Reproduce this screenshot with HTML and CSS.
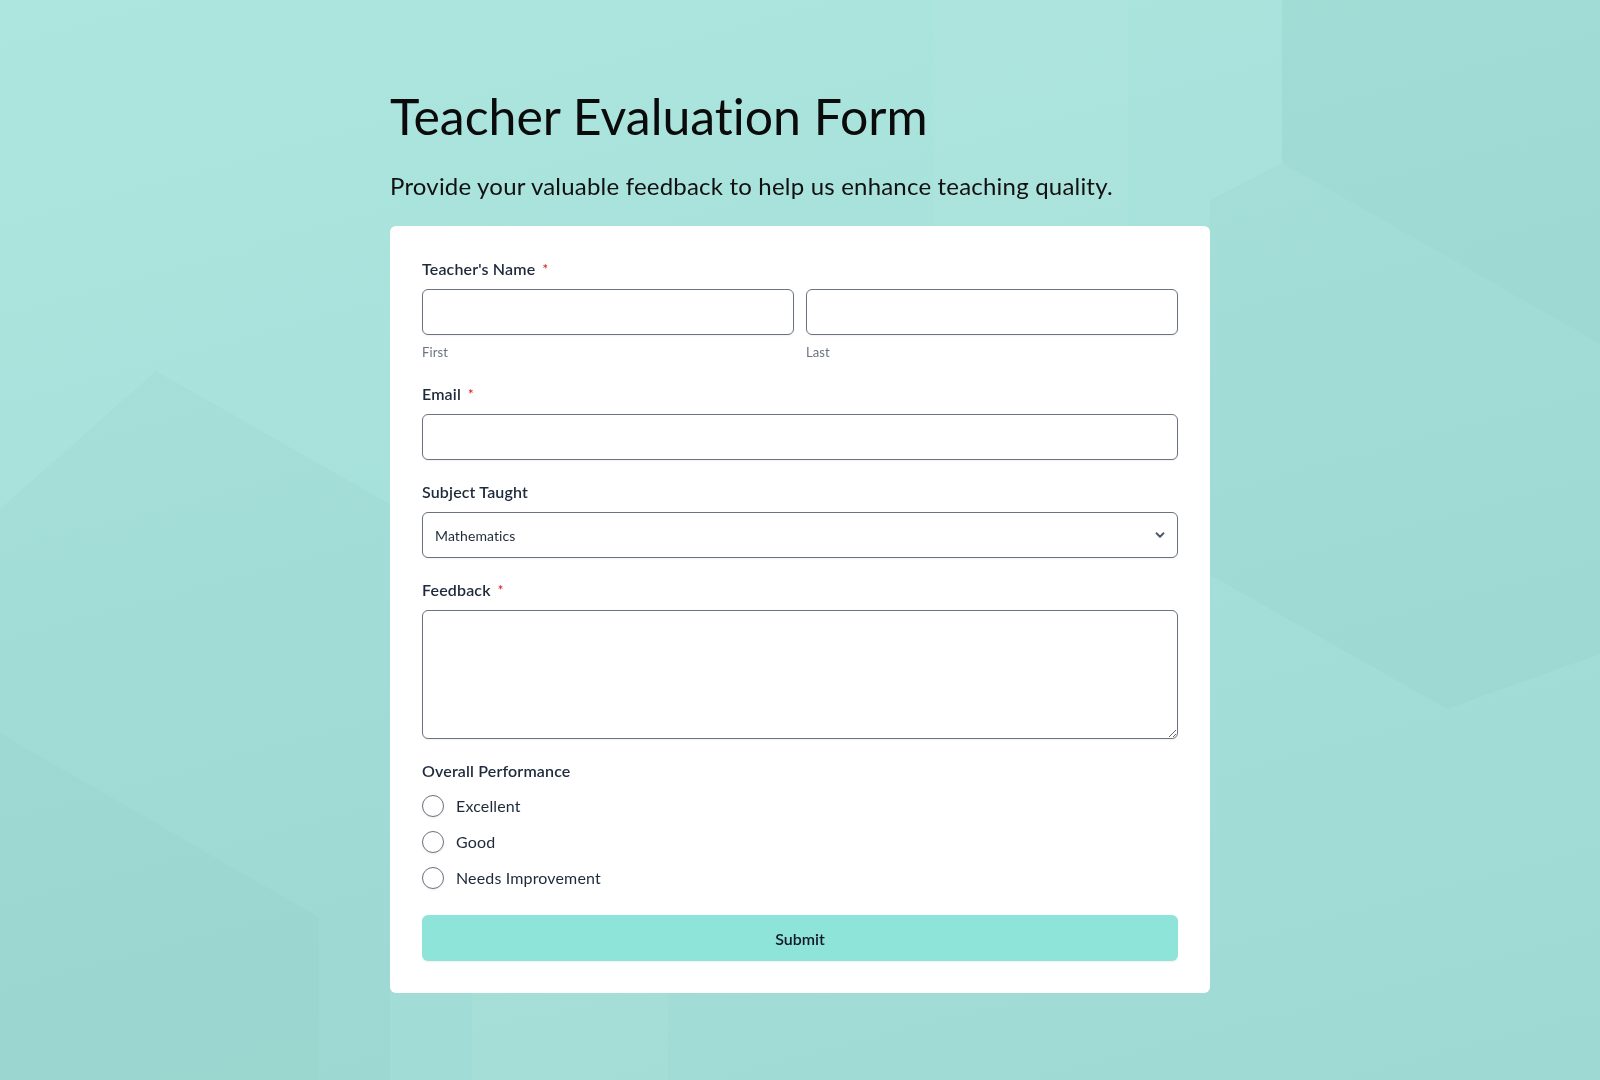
FILE: index.html
```html
<!DOCTYPE html>
<html lang="en">
<head>
  <meta charset="UTF-8">
  <meta name="viewport" content="width=device-width, initial-scale=1.0">
  <title>Teacher Evaluation Form</title>
  <link rel="stylesheet" href="styles.css">
</head>
<body>
  <svg class="backdrop" viewBox="0 0 1600 1080" preserveAspectRatio="none" aria-hidden="true">
    <polygon class="shade" points="1282,0 1600,0 1600,344 1282,163"/>
    <polygon class="shade-soft" points="1210,358 1513,534 1600,486 1600,344 1282,163 1210,200"/>
    <polygon class="shade-soft" points="1210,575 1447,709 1600,654 1600,486 1513,534 1210,358"/>
    <polygon class="light" points="933,0 1128,0 1128,226 933,226"/>
    <polygon class="shade-soft" points="156,371 390,504 390,718 87,544 0,593 0,509"/>
    <polygon class="shade-soft" points="87,544 390,718 390,1080 319,1080 319,917 0,733 0,593"/>
    <polygon class="shade" points="0,733 319,917 319,1080 0,1080"/>
    <polygon class="light" points="472,992 668,992 668,1080 472,1080"/>
  </svg>

  <div class="page">
    <h1 class="title">Teacher Evaluation Form</h1>
    <p class="subtitle">Provide your valuable feedback to help us enhance teaching quality.</p>

    <form class="card" id="evaluationForm">
      <div class="field">
        <label class="label">Teacher's Name <span class="req">*</span></label>
        <div class="name-row">
          <div class="name-part">
            <input type="text" class="input" id="firstName" name="firstName" required>
            <span class="hint">First</span>
          </div>
          <div class="name-part">
            <input type="text" class="input" id="lastName" name="lastName" required>
            <span class="hint">Last</span>
          </div>
        </div>
      </div>

      <div class="field">
        <label class="label" for="email">Email <span class="req">*</span></label>
        <input type="email" class="input" id="email" name="email" required>
      </div>

      <div class="field">
        <label class="label" for="subject">Subject Taught</label>
        <div class="select-wrap">
          <select class="input select" id="subject" name="subject">
            <option>Mathematics</option>
            <option>Science</option>
            <option>English</option>
            <option>History</option>
          </select>
          <svg class="chevron" viewBox="0 0 20 20" width="14" height="14" aria-hidden="true">
            <path d="M5 7.5l5 5 5-5" fill="none" stroke="currentColor" stroke-width="2.6" stroke-linecap="round" stroke-linejoin="round"/>
          </svg>
        </div>
      </div>

      <div class="field">
        <label class="label" for="feedback">Feedback <span class="req">*</span></label>
        <textarea class="input textarea" id="feedback" name="feedback" required></textarea>
      </div>

      <div class="field">
        <span class="label">Overall Performance</span>
        <div class="radios">
          <label class="radio"><input type="radio" name="performance" value="excellent"> Excellent</label>
          <label class="radio"><input type="radio" name="performance" value="good"> Good</label>
          <label class="radio"><input type="radio" name="performance" value="needs-improvement"> Needs Improvement</label>
        </div>
      </div>

      <button type="submit" class="submit">Submit</button>
    </form>
  </div>
</body>
</html>
```

FILE: styles.css
```css
body {
  margin: 0;
  min-height: 1080px;
  font-family: Lato, "Open Sans", sans-serif;
  font-variant-ligatures: none;
  color: #1e293b;
  background: linear-gradient(165deg, #ace6df 0%, #a5dfd9 55%, #9fd9d3 100%);
}

.backdrop {
  position: fixed;
  top: 0;
  left: 0;
  width: 100%;
  height: 100%;
  z-index: -1;
}
.backdrop .shade { fill: rgba(0, 90, 80, 0.045); }
.backdrop .shade-soft { fill: rgba(0, 90, 80, 0.022); }
.backdrop .light { fill: rgba(255, 255, 255, 0.04); }

.page {
  width: 820px;
  margin: 0 auto;
  padding-top: 88px;
}

.title {
  margin: 0 0 26px;
  font-size: 50px;
  font-weight: 400;
  line-height: 57.6px;
  color: #0b0b0b;
}

.subtitle {
  margin: 0 0 26px;
  font-size: 24px;
  line-height: 1.2;
  letter-spacing: 0.2px;
  color: #111;
}

.card {
  background: #fff;
  border-radius: 6px;
  padding: 31px 32px 32px;
}

.field {
  margin-bottom: 20px;
}

.label {
  display: block;
  margin-bottom: 8px;
  font-size: 16px;
  font-weight: 600;
  line-height: 24px;
  letter-spacing: 0.15px;
  color: #1e293b;
}

.req {
  color: #dc2626;
  font-size: 13px;
  margin-left: 3px;
  vertical-align: 1px;
}

.name-row {
  display: flex;
  gap: 12px;
}

.name-part {
  flex: 1;
}

.hint {
  display: block;
  margin-top: 7px;
  font-size: 13px;
  line-height: 20px;
  letter-spacing: 0.1px;
  color: #6b7280;
}

.input {
  display: block;
  box-sizing: border-box;
  width: 100%;
  height: 46px;
  padding: 0 12px;
  border: 1px solid #6b7280;
  border-radius: 6px;
  background: #fff;
  box-shadow: 0 1px 2px rgba(0, 0, 0, 0.06);
  font-family: inherit;
  font-size: 14px;
  letter-spacing: 0.1px;
  color: #1e293b;
}

.select-wrap {
  position: relative;
}

.select {
  appearance: none;
  padding-left: 12px;
}

.chevron {
  position: absolute;
  right: 11px;
  top: 16px;
  color: #4b5563;
  pointer-events: none;
}

.textarea {
  height: 129px;
  padding: 10px 12px;
  resize: vertical;
}

.radios {
  display: flex;
  flex-direction: column;
  gap: 14px;
  padding-top: 4px;
}

.radio {
  display: flex;
  align-items: center;
  gap: 12px;
  font-size: 16px;
  line-height: 22px;
  letter-spacing: 0.15px;
  color: #1e293b;
}

.radio input {
  appearance: none;
  margin: 0;
  width: 22px;
  height: 22px;
  border: 1px solid #6b7280;
  border-radius: 50%;
  background: #fff;
  box-shadow: 0 1px 2px rgba(0, 0, 0, 0.08);
}

.radio input:checked {
  border: 6px solid #5fcfc1;
}

.submit {
  display: block;
  width: 100%;
  height: 46px;
  margin-top: 26px;
  border: none;
  border-radius: 6px;
  background: #8ee4d9;
  box-shadow: 0 1px 2px rgba(0, 0, 0, 0.06);
  font-family: inherit;
  font-size: 16px;
  font-weight: 600;
  color: #111827;
  cursor: pointer;
}
```
